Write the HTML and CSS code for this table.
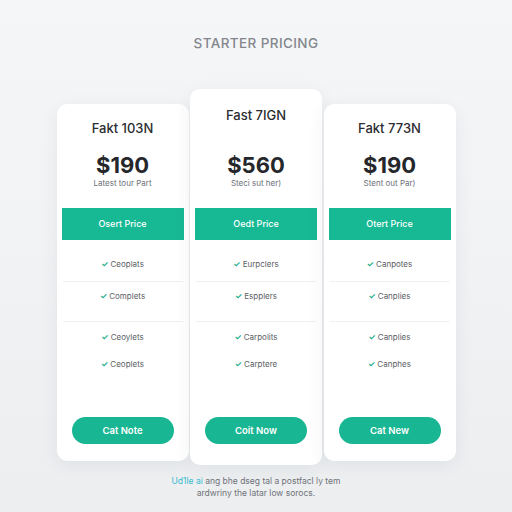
FILE: index.html
```html
<!DOCTYPE html>
<html>
<head>
<meta charset="utf-8">
<link rel="stylesheet" href="styles.css">
</head>
<body>
<div class="page">
  <h1 class="title">STARTER PRICING</h1>
  <div class="cards">
    <div class="card">
      <div class="name">Fakt 103N</div>
      <div class="price">$190</div>
      <div class="sub">Latest tour Part</div>
      <div class="bar">Osert Price</div>
      <div class="feats">
        <div class="feat f1"><span class="chk">✓</span> Ceoplats</div>
        <div class="sep s1"></div>
        <div class="feat f2"><span class="chk">✓</span> Complets</div>
        <div class="sep s2"></div>
        <div class="feat f3"><span class="chk">✓</span> Ceoylets</div>
        <div class="feat f4"><span class="chk">✓</span> Ceoplets</div>
      </div>
      <div class="btn">Cat Note</div>
    </div>
    <div class="card card-featured">
      <div class="name">Fast 7IGN</div>
      <div class="price">$560</div>
      <div class="sub">Steci sut her)</div>
      <div class="bar">Oedt Price</div>
      <div class="feats">
        <div class="feat f1"><span class="chk">✓</span> Eurpclers</div>
        <div class="sep s1"></div>
        <div class="feat f2"><span class="chk">✓</span> Espplers</div>
        <div class="sep s2"></div>
        <div class="feat f3"><span class="chk">✓</span> Carpolits</div>
        <div class="feat f4"><span class="chk">✓</span> Carptere</div>
      </div>
      <div class="btn">Coit Now</div>
    </div>
    <div class="card">
      <div class="name">Fakt 773N</div>
      <div class="price">$190</div>
      <div class="sub">Stent out Par)</div>
      <div class="bar">Otert Price</div>
      <div class="feats">
        <div class="feat f1"><span class="chk">✓</span> Canpotes</div>
        <div class="sep s1"></div>
        <div class="feat f2"><span class="chk">✓</span> Canplies</div>
        <div class="sep s2"></div>
        <div class="feat f3"><span class="chk">✓</span> Canplies</div>
        <div class="feat f4"><span class="chk">✓</span> Canphes</div>
      </div>
      <div class="btn">Cat New</div>
    </div>
  </div>
  <p class="foot"><span class="hl">Ud1le ai</span> ang bhe dseg tal a postfacl ly tem<br>ardwriny the latar low sorocs.</p>
</div>
</body>
</html>
```

FILE: styles.css
```css
html, body {
  margin: 0;
  padding: 0;
}
body {
  width: 512px;
  height: 512px;
  overflow: hidden;
  background: linear-gradient(180deg, #f5f6f8 0%, #f2f3f5 40%, #eceef0 100%);
  font-family: Inter, "Noto Sans", sans-serif;
}
.page {
  display: flex;
  flex-direction: column;
  align-items: center;
}
.title {
  margin: 35px 0 0;
  height: 16px;
  line-height: 16px;
  font-size: 13.5px;
  font-weight: 500;
  letter-spacing: 0.4px;
  color: #83868d;
}
.cards {
  display: flex;
  align-items: flex-start;
  gap: 1.5px;
  margin-top: 38px;
}
.card {
  width: 132px;
  height: 357px;
  margin-top: 15px;
  box-sizing: border-box;
  padding: 16px 5px 17px;
  background: #fff;
  border-radius: 10px;
  box-shadow: 0 4px 18px rgba(40, 50, 70, 0.07);
  display: flex;
  flex-direction: column;
  align-items: stretch;
  text-align: center;
}
.card-featured {
  margin-top: 0;
  height: 376px;
  padding-top: 18px;
  padding-bottom: 21px;
}
.name {
  height: 16px;
  line-height: 16px;
  font-size: 13px;
  font-weight: 500;
  color: #2b2d31;
}
.price {
  margin-top: 16px;
  height: 26px;
  line-height: 26px;
  font-size: 22px;
  font-weight: 700;
  color: #25272b;
}
.card-featured .price {
  margin-top: 29px;
}
.sub {
  height: 10px;
  line-height: 10px;
  font-size: 8px;
  color: #6d7078;
}
.bar {
  margin-top: 20px;
  height: 32px;
  line-height: 32px;
  background: #17b994;
  color: #fff;
  font-size: 9px;
  font-weight: 500;
}
.feats {
  display: flex;
  flex-direction: column;
  padding: 0 1px;
}
.feat {
  height: 16px;
  line-height: 16px;
  font-size: 8px;
  color: #5b5e64;
}
.chk {
  color: #1aae8a;
  font-weight: 700;
  font-size: 8px;
}
.f1 { margin-top: 16px; }
.s1 { margin-top: 9px; }
.f2 { margin-top: 6px; }
.s2 { margin-top: 17px; }
.f3 { margin-top: 7px; }
.f4 { margin-top: 11px; }
.sep {
  height: 1px;
  background: #eef0f2;
}
.btn {
  margin-top: auto;
  align-self: center;
  width: 102px;
  height: 27px;
  line-height: 27px;
  border-radius: 14px;
  background: #18b692;
  color: #fff;
  font-size: 9.5px;
  font-weight: 600;
}
.foot {
  margin: 10px 0 0;
  text-align: center;
  font-size: 8.5px;
  line-height: 12px;
  color: #6f737a;
}
.hl {
  color: #35b9cf;
}
```
